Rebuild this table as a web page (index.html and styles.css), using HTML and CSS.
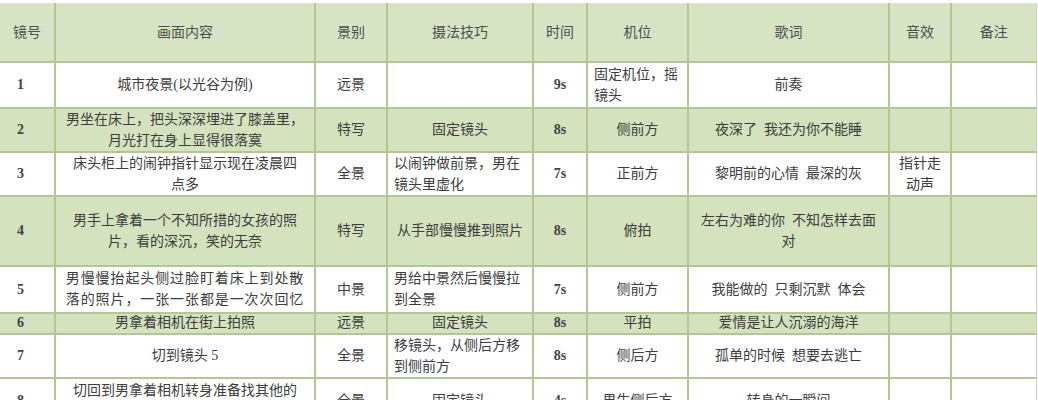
FILE: index.html
```html
<!DOCTYPE html>
<html lang="zh-CN">
<head>
<meta charset="utf-8">
<title>分镜脚本</title>
<link rel="stylesheet" href="styles.css">
</head>
<body>
<table class="board">
  <colgroup>
    <col class="c-no"><col class="c-scene"><col class="c-shot"><col class="c-tech"><col class="c-time"><col class="c-cam"><col class="c-lyric"><col class="c-sfx"><col class="c-note">
  </colgroup>
  <thead>
    <tr class="head">
      <th>镜号</th><th>画面内容</th><th>景别</th><th>摄法技巧</th><th>时间</th><th>机位</th><th>歌词</th><th>音效</th><th>备注</th>
    </tr>
  </thead>
  <tbody>
    <tr class="r1 white">
      <td class="no">1</td><td>城市夜景(以光谷为例)</td><td>远景</td><td></td><td class="num">9s</td><td class="left">固定机位，摇<br>镜头</td><td>前奏</td><td></td><td></td>
    </tr>
    <tr class="r2 green">
      <td class="no">2</td><td>男坐在床上，把头深深埋进了膝盖里，<br>月光打在身上显得很落寞</td><td>特写</td><td>固定镜头</td><td class="num">8s</td><td>侧前方</td><td>夜深了&ensp;我还为你不能睡</td><td></td><td></td>
    </tr>
    <tr class="r3 white">
      <td class="no">3</td><td>床头柜上的闹钟指针显示现在凌晨四<br>点多</td><td>全景</td><td class="left">以闹钟做前景，男在<br>镜头里虚化</td><td class="num">7s</td><td>正前方</td><td>黎明前的心情&ensp;最深的灰</td><td>指针走<br>动声</td><td></td>
    </tr>
    <tr class="r4 green">
      <td class="no">4</td><td>男手上拿着一个不知所措的女孩的照<br>片，看的深沉，笑的无奈</td><td>特写</td><td>从手部慢慢推到照片</td><td class="num">8s</td><td>俯拍</td><td>左右为难的你&ensp;不知怎样去面<br>对</td><td></td><td></td>
    </tr>
    <tr class="r5 white">
      <td class="no">5</td><td class="wide">男慢慢抬起头侧过脸盯着床上到处散<br>落的照片，一张一张都是一次次回忆</td><td>中景</td><td class="left">男给中景然后慢慢拉<br>到全景</td><td class="num">7s</td><td>侧前方</td><td>我能做的&ensp;只剩沉默&ensp;体会</td><td></td><td></td>
    </tr>
    <tr class="r6 green">
      <td class="no">6</td><td>男拿着相机在街上拍照</td><td>远景</td><td>固定镜头</td><td class="num">8s</td><td>平拍</td><td>爱情是让人沉溺的海洋</td><td></td><td></td>
    </tr>
    <tr class="r7 white">
      <td class="no">7</td><td>切到镜头 5</td><td>全景</td><td class="left">移镜头，从侧后方移<br>到侧前方</td><td class="num">8s</td><td>侧后方</td><td>孤单的时候&ensp;想要去逃亡</td><td></td><td></td>
    </tr>
    <tr class="r8 white">
      <td class="no">8</td><td>切回到男拿着相机转身准备找其他的<br>东西拍</td><td>全景</td><td>固定镜头</td><td class="num">4s</td><td>男生侧后方</td><td>转身的一瞬间</td><td></td><td></td>
    </tr>
  </tbody>
</table>
</body>
</html>
```

FILE: styles.css
```css
html, body {
  margin: 0;
  padding: 0;
  background: #ffffff;
}

body {
  padding-top: 3px;
  overflow: hidden;
  height: 400px;
}

.board {
  border-collapse: collapse;
  table-layout: fixed;
  width: 1036px;
  font-family: "Liberation Serif", "Noto Sans CJK SC", serif;
  font-size: 14px;
  line-height: 21px;
  color: #3d3d3d;
}

.c-no { width: 55px; }
.c-scene { width: 260px; }
.c-shot { width: 72px; }
.c-tech { width: 146px; }
.c-time { width: 54px; }
.c-cam { width: 101px; }
.c-lyric { width: 201px; }
.c-sfx { width: 62px; }
.c-note { width: 85px; }

.board th,
.board td {
  border: 2px solid #b2c795;
  padding: 0 6px;
  text-align: center;
  vertical-align: middle;
  white-space: nowrap;
  overflow: hidden;
  font-weight: 400;
}

.board th:first-child,
.board td:first-child {
  border-left: none;
}

.board th:last-child,
.board td:last-child {
  border-right: 1px solid #c9cfc2;
}

.head th {
  background: #d7e4c3;
  color: #4e4e4e;
  border-top: 1px solid #e2e8da;
}

.white td { background: #ffffff; }
.green td { background: #d4e2bd; }

.board td.no {
  text-align: left;
  padding-left: 17px;
  font-weight: 700;
  color: #444;
}

.board td.num {
  font-weight: 700;
  color: #444;
}

.board td.left {
  text-align: left;
}

.board td.wide {
  letter-spacing: 0.9px;
}

.head { height: 58px; }
.r1 { height: 46px; }
.r2 { height: 44px; }
.r3 { height: 44px; }
.r4 { height: 70px; }
.r5 { height: 47px; }
.r6 { height: 21px; line-height: 18px; }
.r7 { height: 43px; }
.r8 { height: 46px; }
```
